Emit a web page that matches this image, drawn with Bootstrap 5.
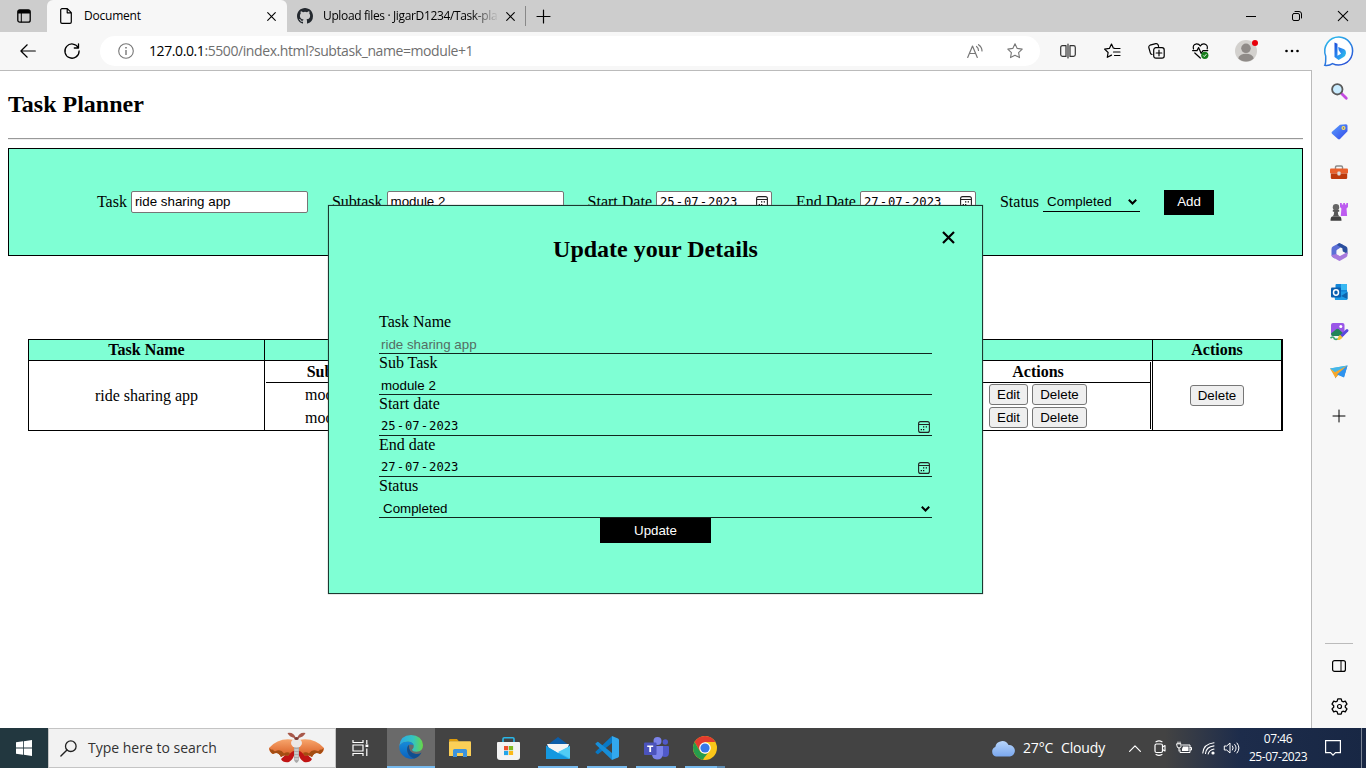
<!DOCTYPE html>
<html lang="en">
<head>
<meta charset="utf-8">
<meta name="viewport" content="width=device-width, initial-scale=1">
<title>Document</title>
<link href="https://cdn.jsdelivr.net/npm/bootstrap@5.3.0/dist/css/bootstrap.min.css" rel="stylesheet">
<style>
html,body{height:100%}
body{width:1366px;height:768px;overflow:hidden;font-family:"Open Sans","Noto Sans",sans-serif;font-size:12px;line-height:1.2;color:#000;background:#fff}
svg{display:block;overflow:visible;flex:none}
.ln{fill:none;stroke:currentColor;stroke-linecap:round;stroke-linejoin:round}
.cell{display:flex;align-items:center;justify-content:center;flex:none}
.c44{width:44px}.c46{width:46px}.c48{width:48px}.c49{width:49px}
/* browser chrome */
.tabstrip{height:32px;background:#cdcdcd}
.tab-on{width:240px;height:32px;margin-left:-1px;background:#f7f7f7;border-radius:6px 6px 0 0;padding-left:13px}
.tab-two{width:238px;padding-left:10px}
.ttl{letter-spacing:-.22px}
.fade-ttl{width:176px;white-space:nowrap;letter-spacing:-.36px;-webkit-mask-image:linear-gradient(90deg,#000 148px,transparent 176px);mask-image:linear-gradient(90deg,#000 148px,transparent 176px)}
.toolbar{height:38px;background:#f7f7f7}
.address{width:940px;height:30px;border-radius:15px;background:#fff;margin:0 6px}
.url{font-size:14px;color:#6f6f6f;letter-spacing:-.41px}
.viewport{flex:1;min-height:0}
.page{width:1312px;border-top:1px solid #bbb;border-right:1px solid #bbb;font-family:"Liberation Serif",serif;font-size:16px}
.rail{width:54px;background:#f7f7f7}
.rail .cell{height:40px}
/* page */
.page h2{font-size:24px;font-weight:700;line-height:28px;margin:0}
.page hr{margin:20px 8px 8px;opacity:1;border:0;border-top:1px solid #999;border-bottom:1px solid #eee;height:2px}
.aqua{background:#7fffd4}
.planner{margin:0 8px;height:108px;border:1px solid #000;gap:24px}
.fld{display:flex;align-items:center;gap:4px;font-size:16px;white-space:nowrap}
.ctl{font:13.333px/1 "Liberation Sans",sans-serif;background:#fff;border:1px solid #767676;border-radius:2px;height:22px;display:flex;align-items:center;padding:0 3px}
.mono{font:12.2px/1 "DejaVu Sans Mono",monospace}
.mono i{font-style:normal;margin:0 1px}
.ul{background:transparent;border:0;border-bottom:1px solid #000;border-radius:0}
.blk{font:13.333px/1 "Liberation Sans",sans-serif;background:#000;color:#fff;height:25px;border:0;padding:0}
.gbtn{font:13.333px/1 "Liberation Sans",sans-serif;background:#efefef;border:1px solid #767676;border-radius:3px;height:21px;padding:0;color:#000}
.grid-t{margin:83px 28px 0;width:1255px;height:92px;border:1px solid #000;border-right-width:2px;display:grid;grid-template-columns:236px 888px 1fr;grid-template-rows:21px 1fr;font-size:16px}
.grid-t>div{display:flex;align-items:center;justify-content:center}
.hd{border-bottom:1px solid #000;font-weight:700}
.br{border-right:1px solid #000}
.grid-t>.inner{display:block;padding:1px 1px 1px}
.inner-box{border-right:1px solid #000;height:67px}
.inner-h{height:21px;border-bottom:1px solid #000;font-weight:700}
.irow{height:23px}
.c-sub{width:144px;text-align:center;white-space:nowrap}
.irow .c-sub{width:138px}
.c-mid{flex:1}
.c-act{width:224px}
.dialog-box{position:absolute;left:328px;top:134px;width:655px;height:389px;border:1px solid #1a3a30;box-shadow:0 0 1px #777;padding:29px 50px 0}
.dialog-box .close-x{position:absolute;right:27px;top:25px}
.mf{height:41px;border-bottom:1px solid #12261f;font-size:16px}
.mf .lb{height:18px;line-height:18px}
.mf .vl{height:22px;display:flex;align-items:center;justify-content:space-between;padding:5px 2px 0;font:13.333px/1 "Liberation Sans",sans-serif}
.mf .vl.mono{font:12.2px/1 "DejaVu Sans Mono",monospace}
/* taskbar */
.taskbar{height:40px;color:#fff;background:linear-gradient(90deg,#434343 0,#434343 1165px,#1d2c4b 1240px,#182744 1366px)}
.start{background:#22373f}
.search{width:288px;background:#f2f2f2;border:1px solid #c4c4c4;color:#333;font-size:14px;padding-left:11px}
.run{border-bottom:2px solid #76b9ed;margin:0 4px 0 5px;width:40px;padding-top:2px}
.t14{font-size:14px;letter-spacing:-.15px}
.clock{width:72px;font-size:12px;line-height:18px;text-align:center;letter-spacing:-.45px}
</style>
</head>
<body class="d-flex flex-column">

<header>
<div class="tabstrip d-flex align-items-center">
  <div class="cell" style="width:48px"><svg width="14" height="14" viewBox="0 0 14 14"><rect class="ln" x=".8" y=".8" width="12.4" height="12.4" rx="2" stroke-width="1.3"/><path d="M1 2.500Q1 1 2.500 1h9Q13 1 13 2.500V4.500H1z"/><path class="ln" d="M4.300 4v9"/></svg></div>
  <div class="tab-on d-flex align-items-center">
    <svg width="12" height="16" viewBox="0 0 12 16"><path class="ln" stroke-width="1.2" d="M2 .7h5.300l4 4V14a1.300 1.300 0 0 1-1.300 1.300H2A1.300 1.300 0 0 1 .7 14V2A1.300 1.300 0 0 1 2 .7zM7.200.8v4h4"/></svg>
    <span class="ttl flex-grow-1" style="margin-left:12px">Document</span>
    <svg width="9" height="9" viewBox="0 0 9 9" style="margin-right:11px"><path class="ln" stroke-width="1.100" d="M.7.7l7.600 7.600M8.300.7L.7 8.300"/></svg>
  </div>
  <div class="tab-two d-flex align-items-center">
    <svg width="16" height="16" viewBox="0 0 16 16" fill="#24292f"><path d="M8 0C3.580 0 0 3.580 0 8c0 3.540 2.290 6.530 5.470 7.590.4.07.55-.17.55-.38 0-.19-.01-.82-.01-1.490-2.010.37-2.530-.49-2.690-.94-.09-.23-.48-.94-.82-1.130-.28-.15-.68-.52-.01-.53.63-.01 1.080.58 1.230.82.72 1.210 1.870.87 2.330.66.07-.52.28-.87.51-1.070-1.780-.2-3.640-.89-3.640-3.950 0-.87.31-1.590.82-2.150-.08-.2-.36-1.020.08-2.120 0 0 .67-.21 2.200.82a7.600 7.600 0 0 1 4 0c1.530-1.040 2.200-.82 2.200-.82.44 1.100.16 1.920.08 2.120.51.56.82 1.270.82 2.150 0 3.070-1.870 3.750-3.650 3.950.29.25.54.73.54 1.480 0 1.070-.01 1.930-.01 2.200 0 .21.15.46.55.38A8 8 0 0 0 16 8c0-4.420-3.580-8-8-8z"/></svg>
    <span class="fade-ttl" style="margin-left:10px">Upload files · JigarD1234/Task-pla</span>
    <svg width="9" height="9" viewBox="0 0 9 9" style="margin-left:7px"><path class="ln" stroke-width="1.100" d="M.7.7l7.600 7.600M8.300.7L.7 8.300"/></svg>
  </div>
  <svg width="1" height="20" viewBox="0 0 1 20"><path d="M0 0h1v20H0z" fill="#888"/></svg>
  <div class="cell" style="width:34px"><svg width="13" height="13" viewBox="0 0 13 13"><path class="ln" stroke-width="1.200" d="M6.500 0v13M0 6.500h13"/></svg></div>
  <div class="ms-auto d-flex">
    <div class="cell c46"><svg width="10" height="10" viewBox="0 0 10 10"><path d="M0 5h10v1H0z"/></svg></div>
    <div class="cell c46"><svg width="10" height="10" viewBox="0 0 10 10"><rect class="ln" x=".5" y="2.500" width="7" height="7" rx="1.500"/><path class="ln" d="M3 .5h4Q9.500.5 9.500 3v4"/></svg></div>
    <div class="cell c46"><svg width="10" height="10" viewBox="0 0 10 10"><path class="ln" stroke-width="1.100" d="M.3.3l9.400 9.400M9.700.3L.3 9.700"/></svg></div>
  </div>
</div>
<div class="toolbar d-flex align-items-center">
  <div class="cell c44" style="margin-left:6px"><svg width="16" height="14" viewBox="0 0 16 14"><path class="ln" stroke-width="1.200" d="M7.200.8L.9 7l6.300 6.200M1 7h14.300"/></svg></div>
  <div class="cell c44"><svg width="16" height="16" viewBox="0 0 16 16"><path class="ln" stroke-width="1.300" d="M14.300 4.800A7.100 7.100 0 1 0 15.100 8M14.500.8v4.200h-4.200"/></svg></div>
  <div class="address d-flex align-items-center">
    <svg style="margin-left:18px;color:#777" width="16" height="16" viewBox="0 0 16 16"><circle class="ln" cx="8" cy="8" r="7.300" stroke-width="1.100"/><path d="M7.300 7h1.400v5H7.300zM7.200 4h1.600v1.600H7.200z" fill="#777"/></svg>
    <span class="url flex-grow-1" style="margin-left:15px"><span class="text-black">127.0.0.1</span>:5500/index.html?subtask_name=module+1</span>
    <svg style="color:#777" width="16" height="15" viewBox="0 0 16 15"><path class="ln" stroke-width="1.200" d="M.7 13.500L5.500 2l4.800 11.500M2.300 9.500h6.400M9.500 2.500q2 1.500 2 4M11.500.7q3.500 2.300 3.500 6.300"/></svg>
    <svg style="margin:0 17px 0 24px;color:#777" width="16" height="16" viewBox="0 0 16 16"><path class="ln" stroke-width="1.100" d="M8 .8l2.200 4.600 5 .7-3.600 3.500.9 5L8 12.200l-4.500 2.400.9-5L.8 6.100l5-.7z"/></svg>
  </div>
  <div class="cell c44"><svg width="16" height="16" viewBox="0 0 16 16" style="color:#333"><path class="ln" stroke-width="1.200" d="M6 2.600H2.500Q.7 2.600.7 4.400v7.200Q.7 13.400 2.500 13.400H6zM10 2.600h3.500q1.800 0 1.800 1.800v7.200q0 1.800-1.800 1.800H10zM8 1v14"/></svg></div>
  <div class="cell c44"><svg width="17" height="16" viewBox="0 0 17 16"><path class="ln" stroke-width="1.200" d="M10.500 5.300L9.300 5 7.500 1 5.400 5.400l-4.800.7 3.500 3.400-.8 4.800 4.200-2.200M10.500 5.500H16M9.500 9H16M10.500 12.500H16"/></svg></div>
  <div class="cell c44"><svg width="17" height="16" viewBox="0 0 17 16"><path class="ln" stroke-width="1.200" d="M4 11.500Q2.700 11.200 2.300 9.800L.8 4.500Q.5 2.800 2 2.200L7.800.7Q9.500.4 10.200 2l.4 1.500"/><rect class="ln" x="5.700" y="4.700" width="10.500" height="10.500" rx="2.200" stroke-width="1.200"/><path class="ln" stroke-width="1.200" d="M11 7.200v5.600M8.200 10h5.600"/></svg></div>
  <div class="cell c44"><svg width="17" height="16" viewBox="0 0 17 16"><path class="ln" stroke-width="1.200" d="M1.500 6Q.3 1.500 4.500.9 7 .8 8.300 3 9.600.8 12 .9q4.200.6 3.200 5M.6 7.600H5l1.600-3 2.600 5.800L11 7.600h4.800M2.800 10l5.500 5"/><circle cx="12.800" cy="12.300" r="3.600" fill="#167c1c"/><path d="M11.300 12.500l1 1 2.100-2.300" fill="none" stroke="#fff"/></svg></div>
  <div class="cell c48"><svg width="22" height="22" viewBox="0 0 22 22"><circle cx="11" cy="11" r="11" fill="#d3d1ce"/><circle cx="11" cy="8.300" r="4.800" fill="#8f8b88"/><path d="M3.200 18.200Q5 13.800 11 13.800t7.800 4.400A11 11 0 0 1 3.200 18.200z" fill="#8f8b88"/><circle cx="20" cy="3" r="3" fill="#e8000b"/></svg></div>
  <div class="cell c44"><svg width="14" height="4" viewBox="0 0 14 4"><circle cx="1.500" cy="2" r="1.300"/><circle cx="7" cy="2" r="1.300"/><circle cx="12.500" cy="2" r="1.300"/></svg></div>
  <div class="cell c48" style="padding-left:2px"><svg width="30" height="31" viewBox="0 0 30 31"><defs><linearGradient id="bg1" x1="0" y1="0" x2=".6" y2="1"><stop offset="0" stop-color="#2cc3ee"/><stop offset="1" stop-color="#2a57d8"/></linearGradient><linearGradient id="bg2" x1="0" y1="0" x2="1" y2="1"><stop offset="0" stop-color="#1b48d8"/><stop offset=".5" stop-color="#2a8cf0"/><stop offset="1" stop-color="#2ed0e8"/></linearGradient></defs><path d="M15 1a14 14 0 1 1-6.500 26.600Q5 30 .8 29.300 2 27 1.700 20A14 14 0 0 1 15 1z" fill="#fff" stroke="url(#bg1)" stroke-width="1.500"/><path d="M10.500 6.500l3 1.300v12l3.600-2-2.400-3.600-.5-3.200 6 2.300q2 1.200 1.800 4-.3 2.600-2.700 3.900l-4.700 2.700-4.100-2.900z" fill="url(#bg2)"/></svg></div>
</div>
</header>

<div class="viewport d-flex">
<main class="page position-relative">
  <h2 style="margin:19px 0 0 8px">Task Planner</h2>
  <hr>
  <section class="planner aqua d-flex align-items-center justify-content-center">
    <div class="fld"><span>Task</span><div class="ctl" style="width:177px">ride sharing app</div></div>
    <div class="fld"><span>Subtask</span><div class="ctl" style="width:177px">module 2</div></div>
    <div class="fld"><span>Start Date</span><div class="ctl mono justify-content-between" style="width:116px"><span>25<i>-</i>07<i>-</i>2023</span><svg width="12" height="12" viewBox="0 0 12 12"><use href="#cal"/></svg></div></div>
    <div class="fld"><span>End Date</span><div class="ctl mono justify-content-between" style="width:116px"><span>27<i>-</i>07<i>-</i>2023</span><svg width="12" height="12" viewBox="0 0 12 12"><use href="#cal"/></svg></div></div>
    <div class="fld"><span>Status</span><div class="ctl ul justify-content-between" style="width:97px;height:19px"><span style="margin-left:1px">Completed</span><svg width="9" height="6" viewBox="0 0 9 6"><path d="M.8.8l3.700 3.700L8.200.8" fill="none" stroke="#000" stroke-width="2"/></svg></div></div>
    <button class="blk" style="width:50px">Add</button>
  </section>

  <section class="grid-t">
    <div class="hd br aqua">Task Name</div>
    <div class="hd br aqua"></div>
    <div class="hd aqua">Actions</div>
    <div class="br">ride sharing app</div>
    <div class="br inner"><div class="inner-box">
      <div class="inner-h d-flex align-items-center"><span class="c-sub">Sub Task</span><span class="c-mid"></span><span class="c-act text-center">Actions</span></div>
      <div class="irow d-flex align-items-center"><span class="c-sub">module 1</span><span class="c-mid"></span><span class="c-act d-flex justify-content-center" style="gap:4px"><button class="gbtn" style="width:39px">Edit</button><button class="gbtn" style="width:55px">Delete</button></span></div>
      <div class="irow d-flex align-items-center"><span class="c-sub">module 2</span><span class="c-mid"></span><span class="c-act d-flex justify-content-center" style="gap:4px"><button class="gbtn" style="width:39px">Edit</button><button class="gbtn" style="width:55px">Delete</button></span></div>
    </div></div>
    <div><button class="gbtn" style="width:54px">Delete</button></div>
  </section>

  <section class="dialog-box aqua">
    <svg class="close-x" width="13" height="13" viewBox="0 0 13 13"><path d="M1 1l11 11M12 1L1 12" stroke="#000" stroke-width="2.200"/></svg>
    <h2 class="text-center" style="margin-bottom:50px">Update your Details</h2>
    <div class="mf"><div class="lb">Task Name</div><div class="vl" style="color:#546d63">ride sharing app</div></div>
    <div class="mf"><div class="lb">Sub Task</div><div class="vl">module 2</div></div>
    <div class="mf"><div class="lb">Start date</div><div class="vl mono"><span>25<i>-</i>07<i>-</i>2023</span><svg width="12" height="12" viewBox="0 0 12 12"><g id="cal"><rect x=".6" y=".6" width="10.800" height="10.800" rx="2" fill="none" stroke="#222" stroke-width="1.100"/><path d="M.6 3.500h10.800" stroke="#222"/><path d="M5 5.300h1.300v1.300H5zM7.700 5.300H9v1.300H7.700zM2.700 8H4v1.300H2.700zM5 8h1.300v1.300H5z" fill="#111"/></g></svg></div></div>
    <div class="mf"><div class="lb">End date</div><div class="vl mono"><span>27<i>-</i>07<i>-</i>2023</span><svg width="12" height="12" viewBox="0 0 12 12"><use href="#cal"/></svg></div></div>
    <div class="mf"><div class="lb">Status</div><div class="vl"><span style="margin-left:2px">Completed</span><svg width="9" height="6" viewBox="0 0 9 6"><path d="M.8.8l3.700 3.700L8.200.8" fill="none" stroke="#000" stroke-width="2"/></svg></div></div>
    <button class="blk d-block mx-auto" style="width:111px">Update</button>
  </section>
</main>

<aside class="rail d-flex flex-column align-items-center">
  <div class="cell" style="margin-top:1px"><svg width="17" height="17" viewBox="0 0 17 17"><path d="M10.500 10.500l4.800 4.700" stroke="#c44be0" stroke-width="2.800" stroke-linecap="round"/><circle cx="6.300" cy="6.300" r="5.200" fill="#c9ecff" stroke="#5a5a5a" stroke-width="1.800"/></svg></div>
  <div class="cell" style="margin-top:1px"><svg width="17" height="16" viewBox="0 0 17 16"><defs><linearGradient id="tg" x1="0" y1="0" x2="1" y2="1"><stop offset="0" stop-color="#5aa0ff"/><stop offset="1" stop-color="#3448e8"/></linearGradient></defs><path d="M9 .8l6-.5q1.500 0 1.500 1.500v5.500L9 15q-1 .9-2 0L1 9.700q-1-1 0-2z" fill="url(#tg)"/><circle cx="12.500" cy="4" r="2" fill="#ffe45c"/><circle cx="12.500" cy="4" r=".8" fill="#4050c0"/></svg></div>
  <div class="cell"><svg width="18" height="15" viewBox="0 0 18 15"><path d="M5.500 4V2.300Q5.500 1 6.800 1h4.400q1.300 0 1.300 1.300V4" fill="none" stroke="#8a8a8a" stroke-width="1.400"/><rect y="3.500" width="18" height="5" rx="1" fill="#e8602c"/><path d="M.8 8.500h16.400v4.300q0 1.200-1.200 1.200H2Q.8 14 .8 12.800z" fill="#bd3a0c"/><rect x="7.400" y="6.600" width="3.200" height="4" rx="1" fill="#ddd"/></svg></div>
  <div class="cell"><svg width="18" height="18" viewBox="0 0 18 18"><path d="M10 0h1.800v1.500h1.400V0h1.800v1.500h1.300V0H18v4l-1.500 1.500.6 7.500h-6.300l.6-7.500L10 4z" fill="#bd5cf0"/><circle cx="6" cy="4.200" r="3.200" fill="#666"/><path d="M2.800 7h6.400v1.800H7.800q0 3.200 1.800 4.700H2.400q1.800-1.500 1.800-4.700H2.800z" fill="#555"/><path d="M.5 17.800q0-4.300 2-4.300h7q2 0 2 4.300z" fill="#3f3f3f"/></svg></div>
  <div class="cell"><svg width="17" height="18" viewBox="0 0 17 18"><path d="M7.500.4L1.800 3.600Q.5 4.500.5 6v6q0 1.500 1.300 2.300l2 1.200 2-4.500V7l5.700-3.700V1.500z" fill="#5b6fd6"/><path d="M7.500.4q1-.6 2 0l5.700 3.200Q16.500 4.500 16.500 6v5l-5-2.800V5.500L6 2z" fill="#2b4f9e"/><path d="M16.500 9v3q0 1.500-1.300 2.300l-5.700 3.300q-1 .6-2 0L1.800 14.300Q.5 13.500.5 12l5.300-1L9 13z" fill="#a779dd"/><path d="M8.500 5.800l3 1.600v3.500l-3 1.800-3-1.800V7.400z" fill="#f7f7f7"/></svg></div>
  <div class="cell"><svg width="17" height="16" viewBox="0 0 17 16"><rect x="4.500" width="11.500" height="12" rx="1" fill="#1486d8"/><path d="M10 0h5q1 0 1 1v5h-6z" fill="#38b8f2"/><path d="M3 8l13.500-.5V15q0 1-1 1H4z" fill="#1e9be6"/><path d="M10 12l6.500-4v7z" fill="#0f63ad"/><rect y="3.500" width="10" height="10" rx="1" fill="#0a5fb0"/><ellipse cx="5" cy="8.500" rx="2.500" ry="2.700" fill="none" stroke="#fff" stroke-width="1.500"/></svg></div>
  <div class="cell"><svg width="18" height="18" viewBox="0 0 18 18"><rect x="1" width="13.500" height="13" rx="2" fill="#9a56e8"/><path d="M1 10.500L6.500 6q1-.7 2 0l5 4.500V13H3q-2 0-2-2.500z" fill="#238558"/><circle cx="10.800" cy="3.500" r="1.500" fill="#fff"/><path d="M.5 15q3-2 3.500 0t4 1" fill="none" stroke="#3aa36d" stroke-width="1.600"/><path d="M17 7.500L11.500 13" stroke="#5a48dd" stroke-width="3" stroke-linecap="round"/><path d="M10 11.700l2.500 2.500Q11 17.300 7 17q1.300-1 1.200-3z" fill="#f6bf35"/></svg></div>
  <div class="cell"><svg width="18" height="14" viewBox="0 0 18 14"><path d="M17.500.5L0 3.500l5 4z" fill="#38b6ec"/><path d="M17.500.5L14 12l-6-2.500-3 4V7.500z" fill="#2f87e6"/><path d="M17.500.5L5 7.500 0 3.500z" fill="#45b7e8"/><path d="M0 3.500l5 3.700L17.500.5 5.500 13z" fill="#f6a72b"/><path d="M17.500.5L14 12.500l-7-3z" fill="#2e93ee"/></svg></div>
  <div class="cell" style="height:48px"><svg width="12" height="12" viewBox="0 0 12 12"><path class="ln" d="M6 0v12M0 6h12"/></svg></div>
  <div class="mt-auto" style="width:28px;border-top:1px solid #bbb;height:3px"></div>
  <div class="cell"><svg width="14" height="12" viewBox="0 0 14 12"><rect class="ln" x=".6" y=".6" width="12.800" height="10.800" rx="2" stroke-width="1.200"/><path class="ln" d="M9 .6v10.800"/></svg></div>
  <div class="cell" style="margin-bottom:2px"><svg width="17" height="17" viewBox="0 0 17 17"><path class="ln" stroke-width="1.300" d="M6.800.9h3.400l.6 2.200 1.200.7 2.300-.6 1.700 2.900-1.700 1.700v1.400l1.700 1.700-1.700 2.900-2.300-.6-1.200.7-.6 2.200H6.800l-.6-2.200-1.200-.7-2.300.6L1 10.900l1.700-1.700V7.800L1 6.100l1.700-2.900 2.300.6 1.200-.7z"/><circle class="ln" cx="8.500" cy="8.500" r="2" stroke-width="1.200"/></svg></div>
</aside>
</div>

<footer class="taskbar d-flex">
  <div class="cell c48 start"><svg width="16" height="16" viewBox="0 0 16 16" fill="#fff"><path d="M0 2.300L7 1.300v6.300H0zM7.800 1.200L16 0v7.600H7.800zM0 8.400h7v6.300l-7-1zM7.800 8.400H16V16l-8.200-1.200z"/></svg></div>
  <div class="search d-flex align-items-center">
    <svg width="17" height="17" viewBox="0 0 17 17" style="color:#222"><circle class="ln" cx="10.800" cy="6.200" r="5.300" stroke-width="1.300"/><path class="ln" stroke-width="1.400" d="M7 10L.9 16.100"/></svg>
    <span class="flex-grow-1" style="margin-left:11px">Type here to search</span>
    <svg width="56" height="34" viewBox="0 0 56 34" style="margin-right:10px"><defs><linearGradient id="wg" x1="0" y1="0" x2="0" y2="1"><stop offset="0" stop-color="#f7a56c"/><stop offset="1" stop-color="#d85a20"/></linearGradient></defs><path d="M27 7.500Q25 1 18.500 2q1.500 4 8.500 5.500zM28 7.500Q30 1 36.500 2 35 6 28 7.500z" fill="#a8584a"/><path d="M24 17L12 28q2 4 8 3 5-3 6-10zM31 17l12 11q-2 4-8 3-5-3-6-10z" fill="#c01414"/><path d="M25 9Q10 6 0 17q0 4 4 6 5-3 8 3 4-3 7-1 4-5 6-5zM30 9q15-3 25 8 0 4-4 6-5-3-8 3-4-3-7-1-4-5-6-5z" fill="url(#wg)"/><path d="M.5 17q0 4 3.500 6 5-3 8 3 4-3 7-1l2-3q-3-1.500-6 .5-3-4.500-7-3-3 2-4-1-2 1-3.500-1.500zM54.500 17q0 4-3.500 6-5-3-8 3-4-3-7-1l-2-3q3-1.500 6 .5 3-4.500 7-3 3 2 4-1 2 1 3.500-1.500z" fill="#a34d12"/><path d="M25 15h5v14q-2.500 6-5 0z" fill="#aaa"/><path d="M25.500 19h4M25.500 22h4M25.500 25h4M25.500 28h4" stroke="#e8e8e8"/><ellipse cx="27.500" cy="12" rx="5.500" ry="4.500" fill="#ece8e6"/><ellipse cx="27.500" cy="7.500" rx="2.200" ry="1.500" fill="#7e3d35"/></svg>
  </div>
  <div class="cell" style="width:51px;padding-right:2px"><svg width="17" height="16" viewBox="0 0 17 16" fill="none" stroke="#fff" stroke-width="1.200"><path d="M1 0v2.500h10V0M1 16v-2.500h10V16M1 5h10v6H1zM14.800 0v4M14.800 8.500V16"/><path d="M13.500 4.500h2.800V7h-2.800z" fill="#fff" stroke="none"/></svg></div>
  <div class="cell c48" style="background:#6a6a6a;border-bottom:2px solid #76b9ed"><svg width="24" height="24" viewBox="0 0 24 24"><defs><linearGradient id="e1" x1="0" y1="0" x2="1" y2="0"><stop offset="0" stop-color="#2aa7e8"/><stop offset=".6" stop-color="#35c5bd"/><stop offset="1" stop-color="#68d845"/></linearGradient><linearGradient id="e2" x1="0" y1="0" x2="0" y2="1"><stop offset="0" stop-color="#168bd9"/><stop offset="1" stop-color="#0b62bd"/></linearGradient></defs><path d="M.2 11Q1.500 0 12 0q11 .5 12 10 0 6.500-6.500 6.800-4-.2-4.500-2 2-1.500 1.800-4Q14 7 9.500 6.700 3 6.500.2 11z" fill="url(#e1)"/><path d="M.2 11Q3 6.400 9.500 6.700q4 .3 5.200 3.500Q8.500 8 8 14q.2 7 7 9.600Q11 24.500 6.500 22.500 0 18.500.2 11z" fill="url(#e2)"/><path d="M8 14q0-2.500 2-4.200-.8 8.200 7 9.200 3 .2 5.500-1.500-2.500 5-7.500 6.200Q8 21 8 14z" fill="#0f4f91"/></svg></div>
  <div class="cell c49"><svg width="22" height="18" viewBox="0 0 22 18"><path d="M0 1.300Q0 0 1.300 0H8l2 2.500H0z" fill="#dd9b0b"/><path d="M0 3q0-.8 1-.8h20q1 0 1 1V17H0z" fill="#fbcf57"/><path d="M4 18v-6.500Q4 10 5.500 10h11q1.500 0 1.500 1.500V18h-4v-4H8v4z" fill="#3d93dd"/></svg></div>
  <div class="cell c49"><svg width="23" height="23" viewBox="0 0 23 23"><path d="M6 6V2q0-1.300 1.300-1.300h8.400Q17 .7 17 2v4" fill="none" stroke="#2ab7e8" stroke-width="1.600"/><path d="M1 5h21q1 0 1 1v14q0 3-3 3H3q-3 0-3-3V6q0-1 1-1z" fill="#f3f3f3"/><path d="M7 9h4.200v4.200H7z" fill="#f0502c"/><path d="M11.900 9h4.200v4.200h-4.200z" fill="#80bb20"/><path d="M7 13.900h4.200v4.200H7z" fill="#22a5ea"/><path d="M11.900 13.900h4.200v4.200h-4.200z" fill="#fbb918"/></svg></div>
  <div class="cell run"><svg width="24" height="22" viewBox="0 0 24 22"><path d="M0 9L12 0l12 9v3H0z" fill="#0c5da8"/><path d="M1 7h22l-3 9H5z" fill="#f4f4f4"/><path d="M0 9l12 7 12-7v12q0 1-1 1H1q-1 0-1-1z" fill="#31b5ee"/><path d="M0 9v12q0 1 1 1h22L12 16z" fill="#1598df"/><path d="M24 9v12.500L12 15z" fill="#51ccf5"/></svg></div>
  <div class="cell run"><svg width="24" height="24" viewBox="0 0 24 24"><path d="M17 0l6 2.500q1 .5 1 1.500v16q0 1-1 1.500L17 24z" fill="#32a8ee"/><path d="M17 0v7L3.300 18q-.5.400-1 0L.7 16.700q-.6-.6 0-1.100z" fill="#0878c5"/><path d="M17 24v-7L3.300 6q-.5-.4-1 0L.7 7.300q-.6.600 0 1.100z" fill="#178ed8"/></svg></div>
  <div class="cell run"><svg width="25" height="23" viewBox="0 0 25 23"><circle cx="13.500" cy="4" r="4" fill="#7b83eb"/><circle cx="21.300" cy="5" r="2.700" fill="#5059c9"/><path d="M17 9h7q1 0 1 1v5.500q0 4.500-4 4.500-3.500 0-4-3.500z" fill="#5059c9"/><path d="M8 9h11v8q-.5 5.500-6 5.500Q8 22 8 17z" fill="#7b83eb"/><rect y="5.500" width="12.500" height="12.500" rx="1" fill="#4b53bc"/><path d="M3.200 8.500h6v1.600H7.100V15H5.300v-4.900H3.200z" fill="#fff"/></svg></div>
  <div class="cell run" style="border-image:linear-gradient(90deg,#76b9ed 0 31px,#5e8bb0 31px 40px) 2"><svg width="24" height="24" viewBox="0 0 24 24"><circle cx="12" cy="12" r="12" fill="#fbc619"/><path d="M1.600 6A12 12 0 0 1 22.400 6H12l-5.200 9z" fill="#e33b2e"/><path d="M1.600 6l5.200 9q2 3 5.200 3l-2 5.800A12 12 0 0 1 1.600 6z" fill="#279c4c"/><path d="M9.500 23.700L15 17l2.200-3Q15 18 12 18l-3-.8z" fill="#279c4c"/><circle cx="12" cy="12" r="5.800" fill="#fff"/><circle cx="12" cy="12" r="4.600" fill="#3777e8"/></svg></div>

  <div class="ms-auto d-flex align-items-center">
    <svg width="24" height="17" viewBox="0 0 24 17"><defs><linearGradient id="cg" x1="0" y1="0" x2="0" y2="1"><stop offset="0" stop-color="#b7d5fb"/><stop offset="1" stop-color="#7aa7ee"/></linearGradient></defs><path d="M5 16.500A5 5 0 0 1 4.300 7 7 7 0 0 1 17.500 5a5.800 5.800 0 0 1 1.500 11.500z" fill="url(#cg)"/></svg>
    <span class="t14" style="margin-left:8px;width:38px">27°C</span><span class="t14" style="width:62px">Cloudy</span>
    <div class="cell" style="width:24px"><svg width="12" height="7" viewBox="0 0 12 7"><path class="ln" stroke-width="1.200" d="M.6 6.400L6 .9l5.400 5.500"/></svg></div>
    <div class="cell" style="width:25px"><svg width="12" height="16" viewBox="0 0 12 16"><rect class="ln" x="1" y="4" width="7.500" height="8.500" rx="1.500" stroke-width="1.200"/><path class="ln" stroke-width="1.100" d="M8.500 7l2.500-1.500v5.500L8.500 9.500M2 1.800Q5 0 8 1.800M2 14.500q3 1.800 6 0"/></svg></div>
    <div class="cell" style="width:24px"><svg width="16" height="12" viewBox="0 0 16 12"><path class="ln" d="M6.500 3h7.500v7.500H4V8M14 5.500h1.500V8H14M1 1.800h4v2.500Q5 6 3 6T1 4.300zM2 0v1.500M4 0v1.500M3 6v3"/><path d="M7 4.500h5.500V9H6V7z" fill="#fff"/></svg></div>
    <div class="cell" style="width:25px"><svg width="13" height="13" viewBox="0 0 13 13"><path class="ln" stroke-width="1.100" d="M.8 11Q1.500 2 12 .8M3.500 11.500Q4 5 12 3.900M6.200 12Q7 8 12 7"/><circle cx="11" cy="11" r="1.600" fill="#fff"/></svg></div>
    <div class="cell" style="width:22px"><svg width="17" height="12" viewBox="0 0 17 12"><path class="ln" d="M.7 4h2L6 1v10L2.700 8h-2zM8.500 4q1.500 2 0 4M10.700 2.500q3 3.500 0 7M13 1q4 5 0 10"/></svg></div>
    <div class="clock" style="margin-left:-1px">07:46<br>25-07-2023</div>
    <div class="cell" style="width:38px"><svg width="16" height="16" viewBox="0 0 16 16"><path d="M.6.6h14.800v12H10.500L8 15.200l-2.500-2.600H.6z" fill="none" stroke="#fff" stroke-width="1.200"/></svg></div>
    <div style="width:1px;height:40px;background:#7a8494;margin:0 4px 0 9px"></div>
  </div>
</footer>
<script src="https://cdn.jsdelivr.net/npm/bootstrap@5.3.0/dist/js/bootstrap.bundle.min.js"></script>
</body>
</html>
